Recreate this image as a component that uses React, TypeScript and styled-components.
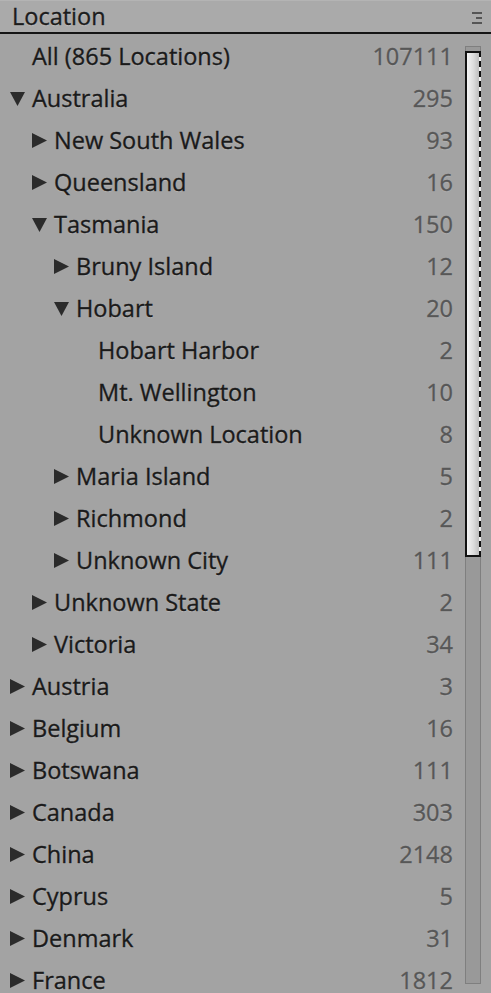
import React from 'react';
import styled, { createGlobalStyle } from 'styled-components';

type Node = {
  label: string;
  count: number;
  level: number;
  arrow?: 'open' | 'closed';
};

const rows: Node[] = [
  { label: 'All (865 Locations)', count: 107111, level: 0 },
  { label: 'Australia', count: 295, level: 0, arrow: 'open' },
  { label: 'New South Wales', count: 93, level: 1, arrow: 'closed' },
  { label: 'Queensland', count: 16, level: 1, arrow: 'closed' },
  { label: 'Tasmania', count: 150, level: 1, arrow: 'open' },
  { label: 'Bruny Island', count: 12, level: 2, arrow: 'closed' },
  { label: 'Hobart', count: 20, level: 2, arrow: 'open' },
  { label: 'Hobart Harbor', count: 2, level: 3 },
  { label: 'Mt. Wellington', count: 10, level: 3 },
  { label: 'Unknown Location', count: 8, level: 3 },
  { label: 'Maria Island', count: 5, level: 2, arrow: 'closed' },
  { label: 'Richmond', count: 2, level: 2, arrow: 'closed' },
  { label: 'Unknown City', count: 111, level: 2, arrow: 'closed' },
  { label: 'Unknown State', count: 2, level: 1, arrow: 'closed' },
  { label: 'Victoria', count: 34, level: 1, arrow: 'closed' },
  { label: 'Austria', count: 3, level: 0, arrow: 'closed' },
  { label: 'Belgium', count: 16, level: 0, arrow: 'closed' },
  { label: 'Botswana', count: 111, level: 0, arrow: 'closed' },
  { label: 'Canada', count: 303, level: 0, arrow: 'closed' },
  { label: 'China', count: 2148, level: 0, arrow: 'closed' },
  { label: 'Cyprus', count: 5, level: 0, arrow: 'closed' },
  { label: 'Denmark', count: 31, level: 0, arrow: 'closed' },
  { label: 'France', count: 1812, level: 0, arrow: 'closed' },
];

const GlobalStyle = createGlobalStyle`
  html, body {
    margin: 0;
    padding: 0;
    background: #a3a3a3;
    overflow: hidden;
  }
  body {
    font-family: "Open Sans", "DejaVu Sans", sans-serif;
  }
`;

const Panel = styled.div`
  width: 491px;
  height: 993px;
  background: #a3a3a3;
  display: flex;
  flex-direction: column;
  overflow: hidden;
`;

const Header = styled.div`
  height: 34px;
  flex-shrink: 0;
  display: flex;
  align-items: center;
  justify-content: space-between;
  padding: 0 9px 2px 12px;
  background: #aaaaaa;
  border-top: 1px solid #b4b4b4;
  border-bottom: 2px solid #151515;
  box-sizing: border-box;
`;

const Title = styled.span`
  font-size: 23.5px;
  color: #1c1c1c;
  -webkit-text-stroke: 0.35px #1c1c1c;
  text-shadow: 0 1px 1px rgba(255, 255, 255, 0.25);
`;

const MenuGrip = styled.div`
  display: flex;
  flex-direction: column;
  gap: 3px;
  margin-top: 4px;

  span {
    display: block;
    width: 10px;
    height: 2px;
    background: #555;
  }
  span:nth-child(2) {
    width: 6px;
    margin-left: 4px;
  }
`;

const Body = styled.div`
  flex: 1;
  display: flex;
  min-height: 0;
`;

const Tree = styled.div`
  flex: 1;
  padding-top: 1px;
`;

const Row = styled.div<{ $level: number }>`
  height: 42px;
  display: flex;
  align-items: center;
  padding-left: ${({ $level }) => 10 + $level * 22}px;
  padding-right: 12px;
  color: #1a1a1a;
  font-size: 23.5px;
  -webkit-text-stroke: 0.35px #1a1a1a;
  text-shadow: 0 1px 1px rgba(255, 255, 255, 0.22);
`;

const Arrow = styled.span`
  width: 22px;
  flex-shrink: 0;
  display: flex;
  align-items: center;
  margin-top: 1px;
`;

const Label = styled.span`
  flex: 1;
  white-space: nowrap;
`;

const Count = styled.span`
  color: #575757;
  -webkit-text-stroke: 0.3px #575757;
  text-shadow: 0 1px 1px rgba(255, 255, 255, 0.15);
`;

const Track = styled.div`
  width: 16px;
  flex-shrink: 0;
  margin: 12px 10px 10px 0;
  box-sizing: border-box;
  height: 938px;
  border: 1px solid #7f7f7f;
  background: #999999;
  padding: 4px 0 0;
`;

const Thumb = styled.div`
  height: 506px;
  box-sizing: border-box;
  border: 2px solid #111;
  border-right-style: dashed;
  background: linear-gradient(to right, #f4f4f4 0%, #dcdcdc 55%, #bdbdbd 100%);
  margin-left: -1px;
  margin-right: -1px;
`;

const Triangle: React.FC<{ open?: boolean }> = ({ open }) =>
  open ? (
    <svg width="15" height="15" viewBox="0 0 15 15">
      <polygon points="0,1 15,1 7.5,15" fill="#2b2b2b" />
    </svg>
  ) : (
    <svg width="15" height="15" viewBox="0 0 15 15">
      <polygon points="0,0 15,7.5 0,15" fill="#2b2b2b" />
    </svg>
  );

const App: React.FC = () => (
  <>
    <GlobalStyle />
    <Panel>
      <Header>
        <Title>Location</Title>
        <MenuGrip>
          <span />
          <span />
          <span />
        </MenuGrip>
      </Header>
      <Body>
        <Tree>
          {rows.map((r) => (
            <Row key={r.label} $level={r.level}>
              <Arrow>{r.arrow && <Triangle open={r.arrow === 'open'} />}</Arrow>
              <Label>{r.label}</Label>
              <Count>{r.count}</Count>
            </Row>
          ))}
        </Tree>
        <Track>
          <Thumb />
        </Track>
      </Body>
    </Panel>
  </>
);

export default App;
